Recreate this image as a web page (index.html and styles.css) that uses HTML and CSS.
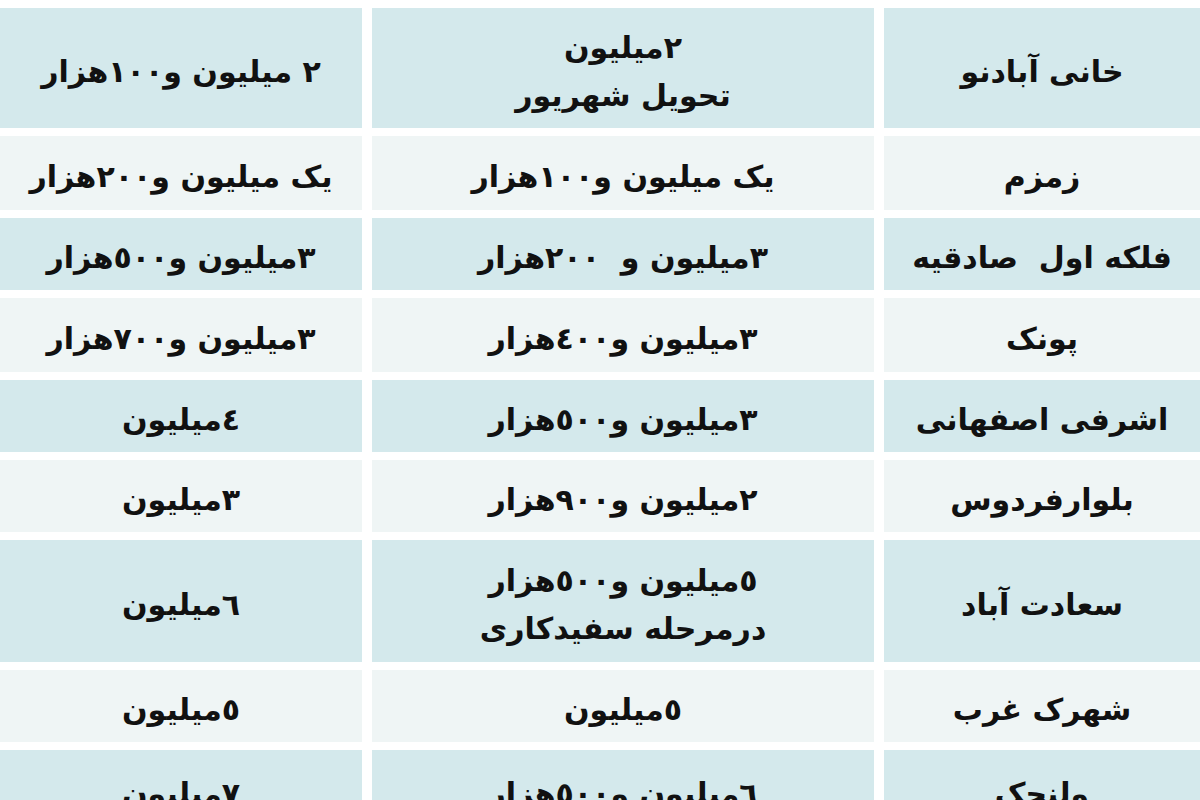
FILE: index.html
```html
<!DOCTYPE html>
<html lang="fa" dir="rtl">
<head>
<meta charset="utf-8">
<title>قیمت</title>
<link rel="stylesheet" href="styles.css">
</head>
<body>
<div class="sheet">
  <div class="cell b">خانی آبادنو</div>
  <div class="cell b">٢میلیون<br>تحویل شهریور</div>
  <div class="cell b">٢ میلیون و١٠٠هزار</div>

  <div class="cell w">زمزم</div>
  <div class="cell w">یک میلیون و١٠٠هزار</div>
  <div class="cell w">یک میلیون و٢٠٠هزار</div>

  <div class="cell b">فلکه اول&nbsp; صادقیه</div>
  <div class="cell b">٣میلیون و&nbsp; ٢٠٠هزار</div>
  <div class="cell b">٣میلیون و٥٠٠هزار</div>

  <div class="cell w">پونک</div>
  <div class="cell w">٣میلیون و٤٠٠هزار</div>
  <div class="cell w">٣میلیون و٧٠٠هزار</div>

  <div class="cell b">اشرفی اصفهانی</div>
  <div class="cell b">٣میلیون و٥٠٠هزار</div>
  <div class="cell b">٤میلیون</div>

  <div class="cell w">بلوارفردوس</div>
  <div class="cell w">٢میلیون و٩٠٠هزار</div>
  <div class="cell w">٣میلیون</div>

  <div class="cell b">سعادت آباد</div>
  <div class="cell b">٥میلیون و٥٠٠هزار<br>درمرحله سفیدکاری</div>
  <div class="cell b">٦میلیون</div>

  <div class="cell w">شهرک غرب</div>
  <div class="cell w">٥میلیون</div>
  <div class="cell w">٥میلیون</div>

  <div class="cell b">ولنجک</div>
  <div class="cell b">٦میلیون و٥٠٠هزار</div>
  <div class="cell b">٧میلیون</div>
</div>
</body>
</html>
```

FILE: styles.css
```css
html, body {
  margin: 0;
  padding: 0;
  background: #ffffff;
}

body {
  width: 1200px;
  height: 800px;
  overflow: hidden;
  font-family: "DejaVu Sans", "Noto Sans", sans-serif;
}

.sheet {
  direction: rtl;
  display: grid;
  grid-template-columns: 316px 502px 362px;
  grid-template-rows: 120px 74px 72px 74px 72px 72px 122px 72px 80px;
  column-gap: 10px;
  row-gap: 8px;
  padding-top: 8px;
}

.cell {
  display: flex;
  align-items: center;
  justify-content: center;
  text-align: center;
  box-sizing: border-box;
  padding-top: 8px;
  color: #111111;
  font-size: 30px;
  font-weight: bold;
  line-height: 48px;
}

.b {
  background: #d4e9ec;
}

.w {
  background: #eff5f5;
}
```
